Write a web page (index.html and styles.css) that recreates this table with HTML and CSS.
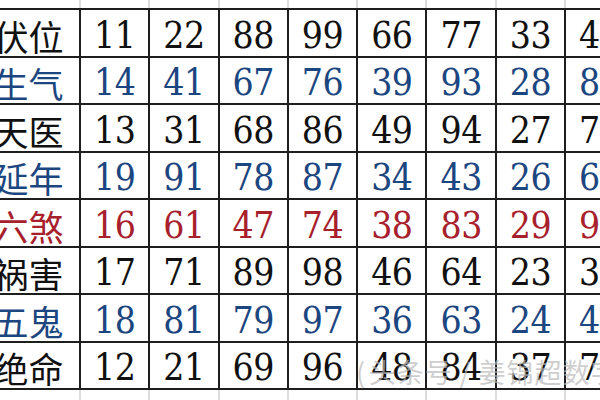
FILE: index.html
```html
<!DOCTYPE html>
<html lang="zh">
<head>
<meta charset="utf-8">
<link rel="stylesheet" href="styles.css">
</head>
<body>
<div class="sheet">
  <div class="ghost ghost-top">
    <span></span><span></span><span></span><span></span><span></span><span></span><span></span><span></span><span></span>
  </div>
  <div class="grid">
    <div class="lab black">伏位</div><div class="num black">11</div><div class="num black">22</div><div class="num black">88</div><div class="num black">99</div><div class="num black">66</div><div class="num black">77</div><div class="num black">33</div><div class="num black">44</div>
    <div class="lab blue">生气</div><div class="num blue">14</div><div class="num blue">41</div><div class="num blue">67</div><div class="num blue">76</div><div class="num blue">39</div><div class="num blue">93</div><div class="num blue">28</div><div class="num blue">82</div>
    <div class="lab black">天医</div><div class="num black">13</div><div class="num black">31</div><div class="num black">68</div><div class="num black">86</div><div class="num black">49</div><div class="num black">94</div><div class="num black">27</div><div class="num black">72</div>
    <div class="lab blue">延年</div><div class="num blue">19</div><div class="num blue">91</div><div class="num blue">78</div><div class="num blue">87</div><div class="num blue">34</div><div class="num blue">43</div><div class="num blue">26</div><div class="num blue">62</div>
    <div class="lab red">六煞</div><div class="num red">16</div><div class="num red">61</div><div class="num red">47</div><div class="num red">74</div><div class="num red">38</div><div class="num red">83</div><div class="num red">29</div><div class="num red">92</div>
    <div class="lab black">祸害</div><div class="num black">17</div><div class="num black">71</div><div class="num black">89</div><div class="num black">98</div><div class="num black">46</div><div class="num black">64</div><div class="num black">23</div><div class="num black">32</div>
    <div class="lab blue">五鬼</div><div class="num blue">18</div><div class="num blue">81</div><div class="num blue">79</div><div class="num blue">97</div><div class="num blue">36</div><div class="num blue">63</div><div class="num blue">24</div><div class="num blue">42</div>
    <div class="lab black">绝命</div><div class="num black">12</div><div class="num black">21</div><div class="num black">69</div><div class="num black">96</div><div class="num black">48</div><div class="num black">84</div><div class="num black">37</div><div class="num black">73</div>
  </div>
  <div class="ghost ghost-bottom">
    <span></span><span></span><span></span><span></span><span></span><span></span><span></span><span></span><span></span>
  </div>
  <div class="watermark">(&#8202;头条号 / 姜锦超数字能量</div>
</div>
</body>
</html>
```

FILE: styles.css
```css
html, body {
  margin: 0;
  padding: 0;
  background: #ffffff;
}

body {
  width: 600px;
  height: 400px;
  overflow: hidden;
}

.sheet {
  position: relative;
  width: 600px;
  height: 400px;
  overflow: hidden;
  display: flex;
  flex-direction: column;
}

.grid,
.ghost {
  display: grid;
  grid-template-columns: 103px repeat(8, 67.3px);
  column-gap: 2px;
  margin-left: -26px;
  width: max-content;
  flex: none;
}

.grid {
  row-gap: 2px;
  grid-auto-rows: 45.5px;
  background: #1e1e1e;
  border: 2px solid #1e1e1e;
}

.ghost {
  background: #dcdcdc;
  padding: 0 2px;
}

.ghost span {
  background: #ffffff;
}

.ghost-top { height: 8px; }
.ghost-bottom { height: 12px; }

.lab,
.num {
  background: #ffffff;
  display: flex;
  align-items: center;
  justify-content: center;
  white-space: nowrap;
  padding-top: 6px;
  box-sizing: border-box;
}

.num {
  font-family: "DejaVu Serif Condensed", "DejaVu Serif", serif;
  font-stretch: condensed;
  font-size: 37px;
  line-height: 36px;
  letter-spacing: -0.5px;
}

.lab {
  font-family: "Noto Sans CJK SC", "Noto Sans", sans-serif;
  font-weight: 400;
  font-size: 35px;
  line-height: 36px;
  padding-left: 2px;
}

.black { color: #111111; }
.blue { color: #1c4680; }
.red { color: #a8202c; }

.watermark {
  position: absolute;
  left: 356px;
  top: 356px;
  font-family: "Noto Sans CJK SC", "Noto Sans", sans-serif;
  font-size: 27px;
  line-height: 32px;
  color: rgba(185, 185, 185, 0.7);
  white-space: nowrap;
  letter-spacing: 1px;
}
```
